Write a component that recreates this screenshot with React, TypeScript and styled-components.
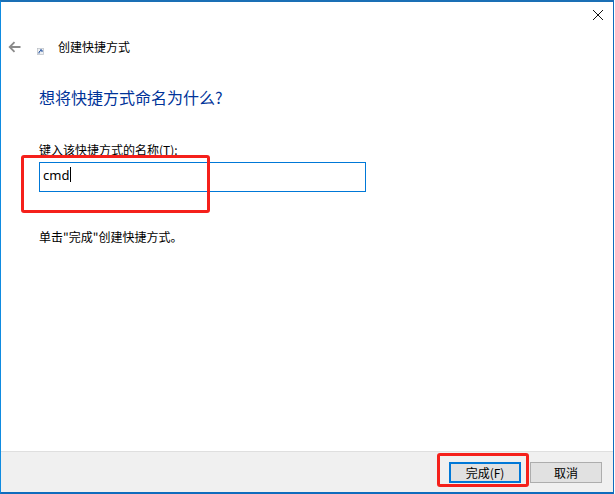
import React from 'react';
import styled, { createGlobalStyle } from 'styled-components';

const GlobalStyle = createGlobalStyle`
  html, body {
    margin: 0;
    padding: 0;
    background: #fff;
  }
  * {
    box-sizing: border-box;
  }
`;

const Window = styled.div`
  position: relative;
  width: 614px;
  height: 494px;
  display: flex;
  flex-direction: column;
  border-style: solid;
  border-color: #1a6fb5 #0f6cbd #0f6cbd #0f8be0;
  border-width: 2px 1px 2px 1px;
  background: #fff;
  font-family: "Noto Sans CJK SC", "Noto Sans", sans-serif;
  color: #000;
  overflow: hidden;
`;

const TitleBar = styled.div`
  height: 31px;
  display: flex;
  justify-content: flex-end;
  align-items: flex-start;
  padding: 7px 9px 0 0;
`;

const Header = styled.div`
  height: 28px;
  display: flex;
  align-items: center;
  padding-left: 7px;
`;

const IconSlot = styled.div<{ $width: number; $drop?: number }>`
  width: ${props => props.$width}px;
  margin-top: ${props => props.$drop || 0}px;
  display: flex;
  align-items: center;
  flex-shrink: 0;
`;

const HeaderTitle = styled.span`
  font-size: 12px;
  line-height: 16px;
`;

const Content = styled.div`
  flex: 1;
  padding: 25px 0 0 38px;
`;

const Heading = styled.h1`
  margin: 0;
  font-size: 16px;
  line-height: 22px;
  font-weight: 400;
  color: #003399;
`;

const FieldLabel = styled.div`
  margin-top: 34px;
  font-size: 12px;
  line-height: 16px;
`;

const NameInput = styled.div`
  width: 327px;
  height: 30px;
  margin-top: 4px;
  border: 1px solid #0078d7;
  padding: 3px 0 0 3px;
  display: flex;
  align-items: flex-start;
  font-family: "Noto Sans", sans-serif;
  font-size: 13px;
  line-height: 18px;
`;

const Caret = styled.span`
  width: 1px;
  height: 15px;
  margin: 1px 0 0 1px;
  background: #000;
`;

const Hint = styled.div`
  margin-top: 37px;
  font-size: 12px;
  line-height: 16px;
`;

const Footer = styled.div`
  height: 41px;
  display: flex;
  justify-content: flex-end;
  gap: 9px;
  padding: 10px 11px 0 0;
  background: #f0f0f0;
  border-top: 1px solid #dfdfdf;
`;

const Button = styled.div<{ $primary?: boolean }>`
  width: ${props => (props.$primary ? 72 : 72)}px;
  height: 21px;
  display: flex;
  align-items: center;
  justify-content: center;
  background: #e1e1e1;
  border: ${props =>
    props.$primary ? '2px solid #0078d7' : '1px solid #adadad'};
  font-size: 12px;
`;

const Highlight = styled.div<{
  $left: number;
  $top: number;
  $width: number;
  $height: number;
}>`
  position: absolute;
  left: ${props => props.$left}px;
  top: ${props => props.$top}px;
  width: ${props => props.$width}px;
  height: ${props => props.$height}px;
  border: 3px solid #f5201b;
  border-radius: 3px;
  pointer-events: none;
`;

const CloseIcon = () => (
  <svg width="12" height="12" viewBox="0 0 12 12">
    <path d="M1 1 L11 11 M11 1 L1 11" stroke="#111" strokeWidth="1" fill="none" />
  </svg>
);

const BackIcon = () => (
  <svg width="13" height="12" viewBox="0 0 13 12">
    <path
      d="M12.5 6 H2 M6.5 1.2 L1.7 6 L6.5 10.8"
      stroke="#8a8a8a"
      strokeWidth="1.8"
      fill="none"
    />
  </svg>
);

const ShortcutIcon = () => (
  <svg width="7" height="7" viewBox="0 0 7 7">
    <rect x="0" y="0" width="7" height="7" fill="#d8dce2" />
    <rect x="0.5" y="0.5" width="6" height="6" fill="#eef0f3" stroke="#b4b8be" strokeWidth="0.5" />
    <path d="M2 5.5 L2 4 L4.2 2.2 M3 2 H5 V4" stroke="#1f4f9e" strokeWidth="1" fill="none" />
  </svg>
);

export default function App() {
  return (
    <>
      <GlobalStyle />
      <Window>
        <TitleBar>
          <CloseIcon />
        </TitleBar>
        <Header>
          <IconSlot $width={29}>
            <BackIcon />
          </IconSlot>
          <IconSlot $width={21} $drop={9}>
            <ShortcutIcon />
          </IconSlot>
          <HeaderTitle>创建快捷方式</HeaderTitle>
        </Header>
        <Content>
          <Heading>想将快捷方式命名为什么?</Heading>
          <FieldLabel>键入该快捷方式的名称(T):</FieldLabel>
          <NameInput>
            cmd
            <Caret />
          </NameInput>
          <Hint>单击"完成"创建快捷方式。</Hint>
        </Content>
        <Footer>
          <Button $primary>完成(F)</Button>
          <Button>取消</Button>
        </Footer>
        <Highlight $left={20} $top={153} $width={189} $height={58} />
        <Highlight $left={436} $top={451} $width={92} $height={34} />
      </Window>
    </>
  );
}
